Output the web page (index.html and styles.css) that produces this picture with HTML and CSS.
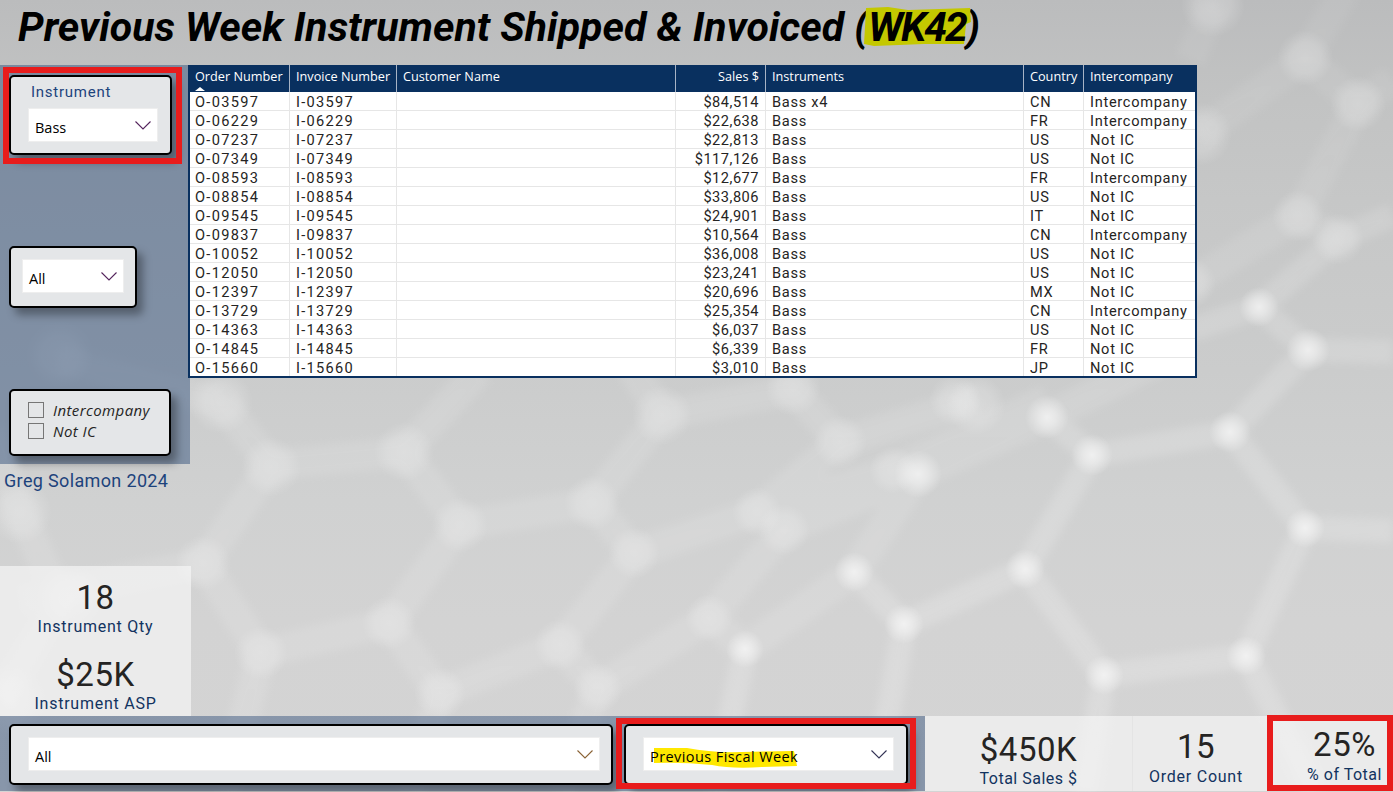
FILE: index.html
```
<!DOCTYPE html>
<html lang="en">
<head>
<meta charset="utf-8">
<title>Previous Week Instrument Shipped &amp; Invoiced</title>
<link rel="stylesheet" href="styles.css">
</head>
<body>
<div class="page">
  <svg class="backdrop" viewBox="0 0 1393 792" aria-hidden="true">
    <defs>
      <filter id="soft" x="-5%" y="-5%" width="110%" height="110%"><feGaussianBlur stdDeviation="4"/></filter>
      <radialGradient id="node"><stop offset="0" stop-color="#fff" stop-opacity=".62"/><stop offset=".4" stop-color="#fff" stop-opacity=".42"/><stop offset="1" stop-color="#fff" stop-opacity="0"/></radialGradient>
      <radialGradient id="dim"><stop offset="0" stop-color="#fff" stop-opacity=".23"/><stop offset=".55" stop-color="#fff" stop-opacity=".17"/><stop offset="1" stop-color="#fff" stop-opacity="0"/></radialGradient>
      <linearGradient id="fade" gradientUnits="userSpaceOnUse" x1="0" y1="0" x2="0" y2="792"><stop offset="0" stop-color="#fff" stop-opacity=".5"/><stop offset=".5" stop-color="#fff" stop-opacity=".9"/><stop offset="1" stop-color="#fff"/></linearGradient>
    </defs>
    <g class="bonds" filter="url(#soft)">
      <path class="wide" d="M221 402L271 465L404 452L460 525L592 503L662 415L793 390L840 442L757 512L634 553L592 503M404 452L480 370M271 465L203 563L261 653L389 623L460 525M389 623L440 693L560 645L634 553M560 645L598 688L709 618L784 530L918 474L1047 417L1180 350M709 618L745 649L854 572L918 474M840 442L976 400M757 512L893 470L1047 400M261 653L225 792M440 693L410 792M598 688L560 792M203 563L20 600M221 402L60 360M662 415L620 350M20 512L-10 430M20 512L60 600L0 700"/>
      <path class="thin" d="M745 649L715 792M854 572L904 624L1025 569L1092 455L1047 417M1092 455L1230 432L1308 350L1393 352M1230 432L1305 528L1393 531M1305 528L1246 656L1104 675L1025 569M904 624L875 792M1104 675L1085 792M1246 656L1315 792M1308 350L1259 307L1338 239L1393 215M1259 307L1190 330"/>
      <path class="wide" d="M1190 283L1298 216L1358 104L1393 80M1358 104L1305 58L1345 -10M1305 58L1200 134M1298 216L1338 239M1190 60L1213 5"/>
    </g>
    <g fill="url(#dim)">
      <circle cx="221" cy="402" r="32"/><circle cx="271" cy="467" r="30"/><circle cx="404" cy="452" r="30"/><circle cx="460" cy="525" r="28"/><circle cx="203" cy="563" r="28"/><circle cx="261" cy="653" r="27"/><circle cx="389" cy="623" r="27"/><circle cx="440" cy="693" r="26"/><circle cx="662" cy="415" r="30"/><circle cx="793" cy="388" r="28"/><circle cx="840" cy="442" r="27"/><circle cx="592" cy="503" r="28"/><circle cx="634" cy="553" r="26"/><circle cx="757" cy="512" r="25"/><circle cx="784" cy="530" r="26"/><circle cx="560" cy="645" r="26"/><circle cx="598" cy="688" r="25"/><circle cx="709" cy="618" r="24"/><circle cx="955" cy="400" r="26"/><circle cx="976" cy="405" r="30"/><circle cx="893" cy="470" r="24"/><circle cx="20" cy="512" r="32"/><circle cx="60" cy="355" r="34"/><circle cx="1305" cy="58" r="28"/><circle cx="1358" cy="104" r="28"/><circle cx="1200" cy="134" r="32"/><circle cx="1213" cy="5" r="32"/><circle cx="1298" cy="216" r="26"/><circle cx="1338" cy="239" r="26"/><circle cx="1190" cy="283" r="26"/><circle cx="70" cy="598" r="34"/><circle cx="10" cy="700" r="36"/>
    </g>
    <g fill="url(#node)">
      <circle cx="745" cy="649" r="19"/><circle cx="854" cy="572" r="20"/><circle cx="918" cy="474" r="24"/><circle cx="1047" cy="417" r="22"/><circle cx="1092" cy="455" r="21"/><circle cx="1230" cy="432" r="21"/><circle cx="1305" cy="528" r="20"/><circle cx="1025" cy="569" r="20"/><circle cx="904" cy="624" r="20"/><circle cx="1104" cy="675" r="20"/><circle cx="1246" cy="656" r="20"/><circle cx="1308" cy="350" r="22"/><circle cx="1259" cy="307" r="20"/>
    </g>
  </svg>

  <header class="title"><h1>Previous Week Instrument Shipped &amp; Invoiced (<span class="week"><svg class="marker" viewBox="0 0 108 40" preserveAspectRatio="none"><path d="M2 1L24 0L44 3L106 1L107 15L102 17L100 37L60 37L10 39L0 37L1 20Z"/></svg><span class="week-text">WK42</span></span>)</h1></header>

  <main class="body">
    <div class="left">
      <aside class="rail">
        <section class="slicer instrument">
          <h2>Instrument</h2>
          <div class="select"><span>Bass</span><svg class="chev" viewBox="0 0 16 9"><path d="M.5.5L8 8L15.500.5"/></svg></div>
          <i class="callout"></i>
        </section>
        <section class="slicer region">
          <div class="select"><span>All</span><svg class="chev" viewBox="0 0 16 9"><path d="M.5.5L8 8L15.500.5"/></svg></div>
        </section>
        <section class="slicer checks">
          <label><i class="box"></i><span class="inter">Intercompany</span></label>
          <label><i class="box"></i><span>Not IC</span></label>
        </section>
      </aside>
      <p class="credit">Greg Solamon 2024</p>
      <div class="kpis">
        <div class="kpi"><b>18</b><span>Instrument Qty</span></div>
        <div class="kpi asp"><b>$25K</b><span>Instrument ASP</span></div>
      </div>
    </div>

    <table class="grid">
      <colgroup><col class="c1"><col class="c2"><col class="c3"><col class="c4"><col class="c5"><col class="c6"><col class="c7"></colgroup>
      <thead><tr><th>Order Number<i class="sort"></i></th><th>Invoice Number</th><th>Customer Name</th><th class="num">Sales $</th><th>Instruments</th><th>Country</th><th>Intercompany</th></tr></thead>
      <tbody>
        <tr><td>O-03597</td><td>I-03597</td><td></td><td class="num">$84,514</td><td>Bass x4</td><td>CN</td><td>Intercompany</td></tr>
        <tr><td>O-06229</td><td>I-06229</td><td></td><td class="num">$22,638</td><td>Bass</td><td>FR</td><td>Intercompany</td></tr>
        <tr><td>O-07237</td><td>I-07237</td><td></td><td class="num">$22,813</td><td>Bass</td><td>US</td><td>Not IC</td></tr>
        <tr><td>O-07349</td><td>I-07349</td><td></td><td class="num">$117,126</td><td>Bass</td><td>US</td><td>Not IC</td></tr>
        <tr><td>O-08593</td><td>I-08593</td><td></td><td class="num">$12,677</td><td>Bass</td><td>FR</td><td>Intercompany</td></tr>
        <tr><td>O-08854</td><td>I-08854</td><td></td><td class="num">$33,806</td><td>Bass</td><td>US</td><td>Not IC</td></tr>
        <tr><td>O-09545</td><td>I-09545</td><td></td><td class="num">$24,901</td><td>Bass</td><td>IT</td><td>Not IC</td></tr>
        <tr><td>O-09837</td><td>I-09837</td><td></td><td class="num">$10,564</td><td>Bass</td><td>CN</td><td>Intercompany</td></tr>
        <tr><td>O-10052</td><td>I-10052</td><td></td><td class="num">$36,008</td><td>Bass</td><td>US</td><td>Not IC</td></tr>
        <tr><td>O-12050</td><td>I-12050</td><td></td><td class="num">$23,241</td><td>Bass</td><td>US</td><td>Not IC</td></tr>
        <tr><td>O-12397</td><td>I-12397</td><td></td><td class="num">$20,696</td><td>Bass</td><td>MX</td><td>Not IC</td></tr>
        <tr><td>O-13729</td><td>I-13729</td><td></td><td class="num">$25,354</td><td>Bass</td><td>CN</td><td>Intercompany</td></tr>
        <tr><td>O-14363</td><td>I-14363</td><td></td><td class="num">$6,037</td><td>Bass</td><td>US</td><td>Not IC</td></tr>
        <tr><td>O-14845</td><td>I-14845</td><td></td><td class="num">$6,339</td><td>Bass</td><td>FR</td><td>Not IC</td></tr>
        <tr><td>O-15660</td><td>I-15660</td><td></td><td class="num">$3,010</td><td>Bass</td><td>JP</td><td>Not IC</td></tr>
      </tbody>
    </table>
  </main>

  <footer class="foot">
    <div class="filters">
      <section class="slicer all"><div class="select"><span>All</span><svg class="chev brown" viewBox="0 0 16 9"><path d="M.5.5L8 8L15.500.5"/></svg></div></section>
      <section class="slicer period">
        <div class="select"><span class="marked"><svg class="marker" viewBox="0 0 145 20" preserveAspectRatio="none"><path d="M2 0L35 0Q60 5 90 4L142 3L145 18L110 19Q80 21 60 17Q30 14 2 15Z"/></svg><span class="marked-text">Previous Fiscal Week</span></span><svg class="chev dark" viewBox="0 0 16 9"><path d="M.5.5L8 8L15.500.5"/></svg></div>
        <i class="callout"></i>
      </section>
    </div>
    <div class="kpi sales"><b>$450K</b><span>Total Sales $</span></div>
    <div class="kpi orders"><b>15</b><span>Order Count</span></div>
    <div class="kpi share"><b>25%</b><span>% of Total</span><i class="callout"></i></div>
  </footer>
</div>
</body>
</html>
```
FILE: styles.css
```
* { box-sizing: border-box; }
body { margin: 0; font-family: Roboto, "Liberation Sans", sans-serif; color: #252423; }
h1, h2, p { margin: 0; }
.page { position: relative; width: 1393px; height: 792px; overflow: hidden; display: flex; flex-direction: column; background: linear-gradient(#bbbcbd 0, #c2c3c3 100px, #c6c7c7 200px, #cbcccc 370px, #d0d1d1 500px, #d3d3d3 620px, #d4d4d4 792px); }
.backdrop { position: absolute; inset: 0; width: 1393px; height: 792px; }
.bonds { opacity: .18; }
.bonds path { fill: none; stroke: url(#fade); stroke-linejoin: round; }
.bonds .wide { stroke-width: 30; stroke-opacity: .68; }
.bonds .thin { stroke-width: 24; }

.title { position: relative; height: 65px; padding-left: 18px; }
.title h1 { font-size: 41px; line-height: 48px; padding-top: 3px; font-weight: 700; font-style: italic; color: #000; white-space: nowrap; letter-spacing: .02px; }
.week { position: relative; letter-spacing: -2px; }
.week-text { position: relative; }
.title .marker { position: absolute; left: -4px; top: 4px; width: 108px; height: 40px; fill: #c4c800; }

.body { position: relative; height: 651px; display: flex; align-items: flex-start; }
.left { width: 191px; height: 651px; display: flex; flex-direction: column; }
.rail { width: 190px; height: 399px; padding: 10px 0 0 9px; background: rgba(60, 88, 128, .52); display: flex; flex-direction: column; align-items: flex-start; }
.slicer { position: relative; border: 2px solid #000; border-radius: 5px; background: #e4e6e8; box-shadow: 6px 7px 9px rgba(0, 0, 0, .34); }
.slicer h2 { font-size: 15px; line-height: 18px; font-weight: 400; color: #1d437c; letter-spacing: .75px; padding-left: 3px; margin-bottom: 7px; }
.select { display: flex; align-items: center; justify-content: space-between; background: #fff; border: 1px solid #eee; font: 14.5px/28px "Open Sans", "Noto Sans", sans-serif; color: #000; height: 34px; padding: 5px 6px 0; }
.chev { width: 16px; height: 9px; fill: none; stroke: #54245c; stroke-width: 1.1; margin-top: -4px; }
.chev.brown { stroke: #8a6235; }
.chev.dark { stroke: #333355; }
.instrument { width: 163px; height: 80px; padding: 6px 12px 0 17px; }
.region { width: 128px; height: 62px; margin-top: 91px; padding: 11px 11px 0; }
.checks { width: 162px; height: 67px; margin-top: 81px; padding: 9px 0 0 17px; font: italic 15px/21px "Open Sans", "Noto Sans", sans-serif; letter-spacing: .4px; }
.checks label { display: flex; align-items: center; gap: 9px; }
.box { width: 16px; height: 16px; margin-top: -1px; border: 1px solid #767676; }
.callout { position: absolute; border: 6px solid #e81c1c; }
.instrument .callout { left: -8px; top: -10px; width: 179px; height: 97px; }
.period .callout { left: -10px; top: -8px; width: 300px; height: 71px; }
.share .callout { left: 0; top: -1px; width: 126px; height: 76px; }
.credit { font-size: 18px; line-height: 24px; margin: 5px 0 0 4px; letter-spacing: .35px; color: #1d437c; white-space: nowrap; }

.kpis { margin-top: auto; height: 150px; }
.kpi { position: relative; display: flex; flex-direction: column; align-items: center; background: rgba(248, 248, 248, .66); white-space: nowrap; }
.kpi b { font-weight: 400; font-size: 33px; line-height: 38px; letter-spacing: .5px; }
.kpi span { font-size: 16px; line-height: 20px; letter-spacing: .75px; color: #12335f; }
.kpis .kpi { height: 75px; padding-top: 13px; }
.kpis .asp { padding-top: 15px; }

.grid { margin-left: -3px; margin-top: 0; width: 1009px; table-layout: fixed; border-collapse: separate; border-spacing: 0; background: #fff; border: solid #09305f; border-width: 0 2px 2px; }
.c1 { width: 100px; } .c2 { width: 107px; } .c3 { width: 279px; } .c4 { width: 90px; } .c5 { width: 258px; } .c6 { width: 60px; } .c7 { width: 111px; }
.grid th { position: relative; height: 27px; background: #09305f; border-right: 1px solid #a7b3c5; color: #fff; font: 12.7px/18px "Open Sans", "Noto Sans", sans-serif; text-align: left; vertical-align: top; padding: 2px 0 0 6px; white-space: nowrap; }
.grid td { height: 19px; padding: 2px 0 0 6px; border-right: 1px solid #e6e6e6; border-bottom: 1px solid #e6e6e6; font-size: 14.6px; line-height: 16px; letter-spacing: .7px; white-space: nowrap; }
.grid th:first-child, .grid td:first-child { padding-left: 5px; }
.grid td:nth-child(-n+2) { letter-spacing: 1.3px; }
.grid th:last-child, .grid td:last-child { border-right: 0; }
.grid tbody tr:last-child td { height: 18px; border-bottom: 0; }
.grid .num { text-align: right; padding: 2px 6px 0 0; }
.grid td.num { letter-spacing: .5px; }
.sort { position: absolute; left: 5px; bottom: 1px; border: 5px solid transparent; border-top: 0; border-bottom: 4px solid #fff; }

.foot { position: relative; height: 75px; display: flex; }
.filters { width: 925px; height: 75px; background: rgba(60, 88, 128, .5); padding: 8px 0 0 9px; display: flex; gap: 11px; }
.foot .slicer { height: 61px; padding-top: 11px; }
.all { width: 604px; padding-left: 17px; padding-right: 11px; }
.period { width: 284px; padding-left: 17px; padding-right: 12px; }
.marked, .marked-text { position: relative; }
.marked { letter-spacing: .42px; }
.marked .marker { position: absolute; left: 2px; top: 5px; width: 145px; height: 20px; fill: #ffe800; }
.foot .kpi { height: 75px; }
.foot .sales { width: 208px; padding-top: 15px; border-right: 1px solid #e4e4e4; }
.foot .sales span { letter-spacing: .5px; }
.foot .orders { width: 134px; padding: 12px 8px 0 0; }
.foot .orders span { padding-top: 1px; }
.foot .share { width: 126px; padding: 10px 0 0 29px; }
.foot .share span { letter-spacing: .5px; padding-top: 1px; }
```
